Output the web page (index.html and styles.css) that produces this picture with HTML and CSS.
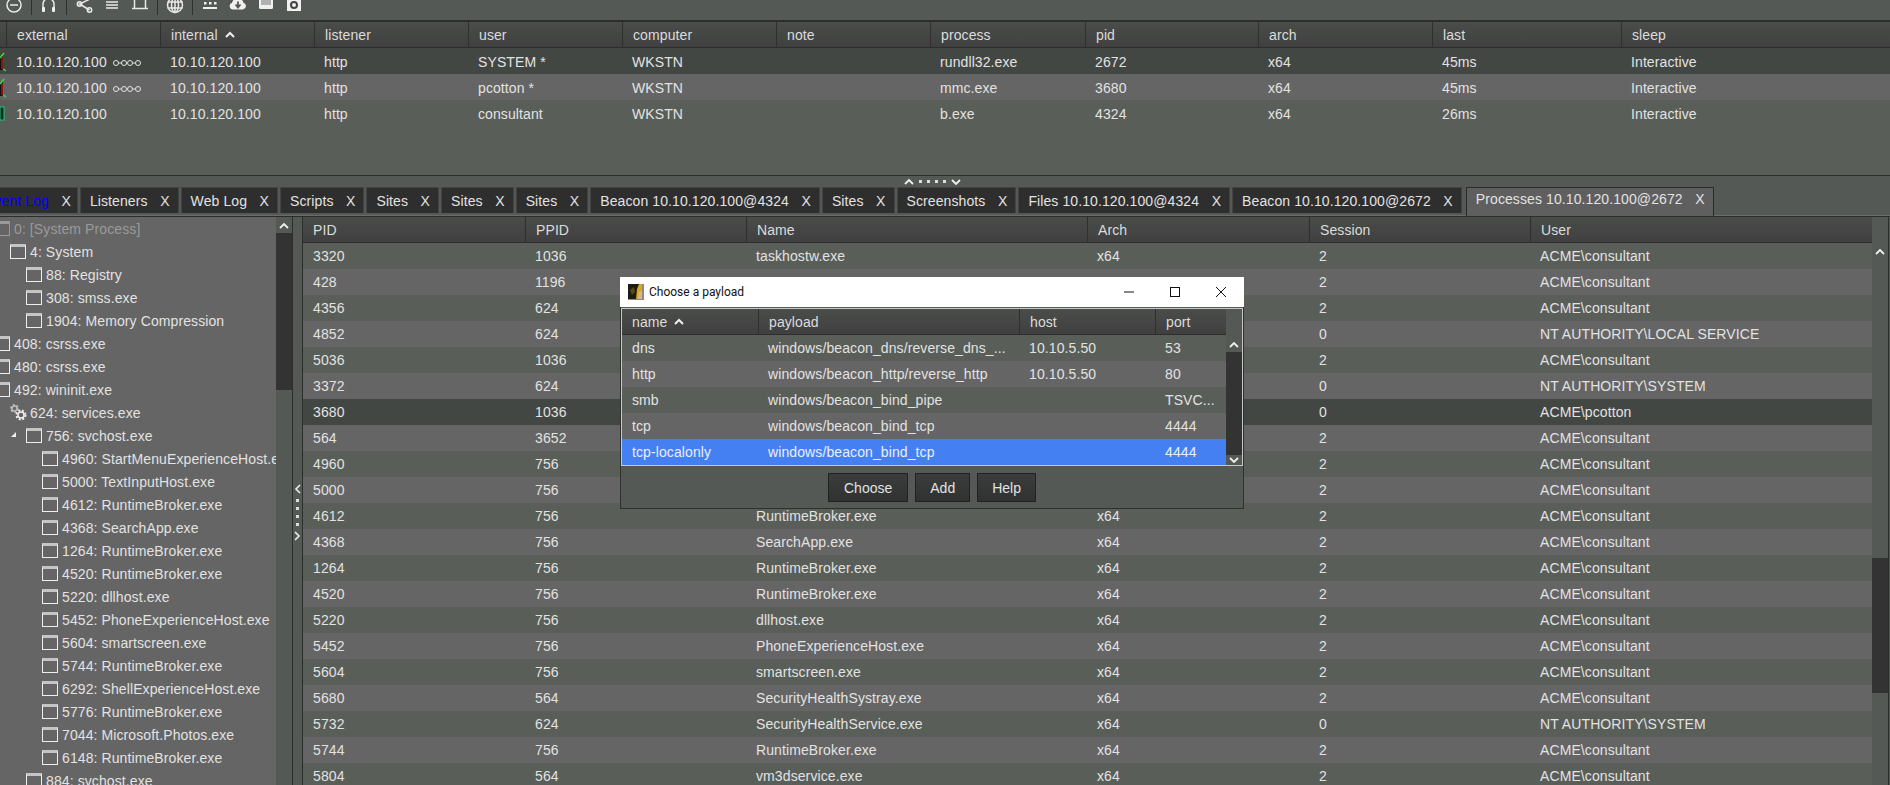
FILE: index.html
```html
<!DOCTYPE html>
<html>
<head>
    <title>Processes</title>
    <link rel="stylesheet" href="styles.css">
</head>
<body>
    <div class="toolbar">
        <svg class="tool" viewBox="0 0 28 20"><circle cx="14" cy="5" r="7"/><path d="M10 5H18"/></svg>
        <span class="tool-sep"></span>
        <svg class="tool" viewBox="0 0 28 20"><path d="M8 9V4a5 5 0 0 1 11 0v5"/><rect class="fill" x="7" y="7" width="3" height="5" rx="1"/><rect class="fill" x="17" y="7" width="3" height="5" rx="1"/></svg>
        <span class="tool-sep"></span>
        <svg class="tool" viewBox="0 0 28 20"><path d="M20 -1L9.500 4L19.500 10"/><circle cx="9.500" cy="4" r="2.200"/><circle cx="19.500" cy="10" r="2.200"/></svg>
        <svg class="tool" viewBox="0 0 28 20"><path d="M8 2H20M8 5H20M8 8H20"/></svg>
        <svg class="tool" viewBox="0 0 28 20"><path d="M8.500 -2V8M19.500 -2V8M6 8.500H22"/></svg>
        <span class="tool-sep"></span>
        <svg class="tool" viewBox="0 0 28 20"><circle cx="14" cy="5" r="7.500"/><ellipse cx="14" cy="5" rx="3.500" ry="7.500"/><path d="M14 -3V13M6.500 2H21.500M6.500 8H21.500"/></svg>
        <span class="tool-sep"></span>
        <svg class="tool" viewBox="0 0 28 20"><rect class="fill" x="8" y="2" width="2.500" height="2.500"/><rect class="fill" x="13" y="2" width="2.500" height="2.500"/><rect class="fill" x="18" y="2" width="2.500" height="2.500"/><rect class="fill" x="7" y="7" width="14" height="2"/></svg>
        <svg class="tool" viewBox="0 0 28 20"><path class="fill" d="M9 9.500a3.500 3.500 0 0 1 -1 -6.800a6 6 0 0 1 11.500 0a3.500 3.500 0 0 1 -.5 6.800Z"/><path class="cut" d="M14 1.500V6M11.500 4.500L14 7.500L16.500 4.500"/></svg>
        <svg class="tool" viewBox="0 0 28 20"><rect class="fill" x="7" y="-3" width="14" height="12" rx="1.500"/><rect class="key" x="9" y="0" width="10" height="5"/></svg>
        <svg class="tool" viewBox="0 0 28 20"><rect class="fill" x="7" y="-2" width="14" height="13"/><circle class="lens" cx="14" cy="5" r="3"/></svg>
    </div>

    <div class="sessions">
        <div class="sess-row sess-head">
            <div></div><div>external</div><div>internal <svg class="sort" viewBox="0 0 10 7"><path d="M1 6L5 2L9 6"/></svg></div><div>listener</div><div>user</div><div>computer</div><div>note</div><div>process</div><div>pid</div><div>arch</div><div>last</div><div>sleep</div>
        </div>
        <div class="sess-row row-dark">
            <div class="cell-icon"><svg viewBox="0 0 6 26" width="6" height="26"><rect x="0" y="8" width="3" height="14" fill="#111"/><rect x="1" y="9" width="2" height="12" fill="#8a1414"/><path d="M0 10L4 5M3 21L6 23" stroke="#3be03b" stroke-width="1.500"/></svg></div>
            <div>10.10.120.100<svg class="chain" viewBox="0 0 30 8"><circle cx="4" cy="4" r="2.500"/><circle cx="12" cy="4" r="2.500"/><circle cx="18" cy="4" r="2.500"/><circle cx="26" cy="4" r="2.500"/><path d="M6.500 4H9.500M20.500 4H23.500"/></svg></div>
            <div>10.10.120.100</div><div>http</div><div>SYSTEM *</div><div>WKSTN</div><div></div><div>rundll32.exe</div><div>2672</div><div>x64</div><div>45ms</div><div>Interactive</div>
        </div>
        <div class="sess-row row-light">
            <div class="cell-icon"><svg viewBox="0 0 6 26" width="6" height="26"><rect x="0" y="8" width="3" height="14" fill="#111"/><rect x="1" y="9" width="2" height="12" fill="#8a1414"/><path d="M0 10L4 5M3 21L6 23" stroke="#3be03b" stroke-width="1.500"/></svg></div>
            <div>10.10.120.100<svg class="chain" viewBox="0 0 30 8"><circle cx="4" cy="4" r="2.500"/><circle cx="12" cy="4" r="2.500"/><circle cx="18" cy="4" r="2.500"/><circle cx="26" cy="4" r="2.500"/><path d="M6.500 4H9.500M20.500 4H23.500"/></svg></div>
            <div>10.10.120.100</div><div>http</div><div>pcotton *</div><div>WKSTN</div><div></div><div>mmc.exe</div><div>3680</div><div>x64</div><div>45ms</div><div>Interactive</div>
        </div>
        <div class="sess-row">
            <div class="cell-icon"><svg viewBox="0 0 6 26" width="6" height="26"><rect x="0" y="7" width="4" height="13" fill="#0b2a2a" stroke="#27c46a"/></svg></div>
            <div>10.10.120.100</div><div>10.10.120.100</div><div>http</div><div>consultant</div><div>WKSTN</div><div></div><div>b.exe</div><div>4324</div><div>x64</div><div>26ms</div><div>Interactive</div>
        </div>
    </div>

    <div class="splitter">
        <svg class="chev" viewBox="0 0 10 7"><path d="M1 6L5 2L9 6"/></svg>
        <span class="dot"></span><span class="dot"></span><span class="dot"></span><span class="dot"></span>
        <svg class="chev" viewBox="0 0 10 7"><path d="M1 2L5 6L9 2"/></svg>
    </div>

    <div class="tabs">
        <div class="tab first"><span class="log-link">Event Log</span><span class="x">X</span></div>
        <div class="tab">Listeners<span class="x">X</span></div>
        <div class="tab">Web Log<span class="x">X</span></div>
        <div class="tab">Scripts<span class="x">X</span></div>
        <div class="tab">Sites<span class="x">X</span></div>
        <div class="tab">Sites<span class="x">X</span></div>
        <div class="tab">Sites<span class="x">X</span></div>
        <div class="tab">Beacon 10.10.120.100@4324<span class="x">X</span></div>
        <div class="tab">Sites<span class="x">X</span></div>
        <div class="tab">Screenshots<span class="x">X</span></div>
        <div class="tab">Files 10.10.120.100@4324<span class="x">X</span></div>
        <div class="tab">Beacon 10.10.120.100@2672<span class="x">X</span></div>
        <div class="tab active">Processes 10.10.120.100@2672<span class="x">X</span></div>
    </div>

    <div class="workspace">
        <div class="tree-panel">
            <div class="tree">
                <div class="node lvl0 dim"><i class="win"></i>0: [System Process]</div>
                <div class="node lvl1"><i class="win"></i>4: System</div>
                <div class="node lvl2"><i class="win"></i>88: Registry</div>
                <div class="node lvl2"><i class="win"></i>308: smss.exe</div>
                <div class="node lvl2"><i class="win"></i>1904: Memory Compression</div>
                <div class="node lvl0"><i class="win"></i>408: csrss.exe</div>
                <div class="node lvl0"><i class="win"></i>480: csrss.exe</div>
                <div class="node lvl0"><i class="win"></i>492: wininit.exe</div>
                <div class="node lvl1 svc">
                    <svg class="gears" viewBox="0 0 17 17"><circle cx="4.500" cy="4.500" r="2.500"/><circle class="teeth" cx="4.500" cy="4.500" r="3.500"/><circle class="big" cx="11" cy="11" r="3"/><circle class="teeth big" cx="11" cy="11" r="4.500"/></svg>624: services.exe
                </div>
                <div class="node lvl2 open"><svg class="tri" viewBox="0 0 5 5"><path d="M0 5L5 0V5Z"/></svg><i class="win"></i>756: svchost.exe</div>
                <div class="node lvl3"><i class="win"></i>4960: StartMenuExperienceHost.exe</div>
                <div class="node lvl3"><i class="win"></i>5000: TextInputHost.exe</div>
                <div class="node lvl3"><i class="win"></i>4612: RuntimeBroker.exe</div>
                <div class="node lvl3"><i class="win"></i>4368: SearchApp.exe</div>
                <div class="node lvl3"><i class="win"></i>1264: RuntimeBroker.exe</div>
                <div class="node lvl3"><i class="win"></i>4520: RuntimeBroker.exe</div>
                <div class="node lvl3"><i class="win"></i>5220: dllhost.exe</div>
                <div class="node lvl3"><i class="win"></i>5452: PhoneExperienceHost.exe</div>
                <div class="node lvl3"><i class="win"></i>5604: smartscreen.exe</div>
                <div class="node lvl3"><i class="win"></i>5744: RuntimeBroker.exe</div>
                <div class="node lvl3"><i class="win"></i>6292: ShellExperienceHost.exe</div>
                <div class="node lvl3"><i class="win"></i>5776: RuntimeBroker.exe</div>
                <div class="node lvl3"><i class="win"></i>7044: Microsoft.Photos.exe</div>
                <div class="node lvl3"><i class="win"></i>6148: RuntimeBroker.exe</div>
                <div class="node lvl2"><i class="win"></i>884: svchost.exe</div>
            </div>
            <div class="scroll tree-scroll">
                <svg class="chev" viewBox="0 0 10 7"><path d="M1 6L5 2L9 6"/></svg>
                <div class="thumb"></div>
            </div>
        </div>

        <div class="vsplit">
            <svg class="vchev" viewBox="0 0 7 10"><path d="M6 1L2 5L6 9"/></svg>
            <span class="dot"></span><span class="dot"></span><span class="dot"></span><span class="dot"></span>
            <svg class="vchev" viewBox="0 0 7 10"><path d="M1 1L5 5L1 9"/></svg>
        </div>

        <div class="proc-panel">
            <div class="proc">
                <div class="proc-row sess-head"><div>PID</div><div>PPID</div><div>Name</div><div>Arch</div><div>Session</div><div>User</div></div>
                <div class="proc-row"><div>3320</div><div>1036</div><div>taskhostw.exe</div><div>x64</div><div>2</div><div>ACME\consultant</div></div>
                <div class="proc-row row-light"><div>428</div><div>1196</div><div></div><div></div><div>2</div><div>ACME\consultant</div></div>
                <div class="proc-row"><div>4356</div><div>624</div><div></div><div></div><div>2</div><div>ACME\consultant</div></div>
                <div class="proc-row row-light"><div>4852</div><div>624</div><div></div><div></div><div>0</div><div>NT AUTHORITY\LOCAL SERVICE</div></div>
                <div class="proc-row"><div>5036</div><div>1036</div><div></div><div></div><div>2</div><div>ACME\consultant</div></div>
                <div class="proc-row row-light"><div>3372</div><div>624</div><div></div><div></div><div>0</div><div>NT AUTHORITY\SYSTEM</div></div>
                <div class="proc-row row-dark"><div>3680</div><div>1036</div><div></div><div></div><div>0</div><div>ACME\pcotton</div></div>
                <div class="proc-row row-light"><div>564</div><div>3652</div><div></div><div></div><div>2</div><div>ACME\consultant</div></div>
                <div class="proc-row"><div>4960</div><div>756</div><div></div><div></div><div>2</div><div>ACME\consultant</div></div>
                <div class="proc-row row-light"><div>5000</div><div>756</div><div></div><div></div><div>2</div><div>ACME\consultant</div></div>
                <div class="proc-row"><div>4612</div><div>756</div><div>RuntimeBroker.exe</div><div>x64</div><div>2</div><div>ACME\consultant</div></div>
                <div class="proc-row row-light"><div>4368</div><div>756</div><div>SearchApp.exe</div><div>x64</div><div>2</div><div>ACME\consultant</div></div>
                <div class="proc-row"><div>1264</div><div>756</div><div>RuntimeBroker.exe</div><div>x64</div><div>2</div><div>ACME\consultant</div></div>
                <div class="proc-row row-light"><div>4520</div><div>756</div><div>RuntimeBroker.exe</div><div>x64</div><div>2</div><div>ACME\consultant</div></div>
                <div class="proc-row"><div>5220</div><div>756</div><div>dllhost.exe</div><div>x64</div><div>2</div><div>ACME\consultant</div></div>
                <div class="proc-row row-light"><div>5452</div><div>756</div><div>PhoneExperienceHost.exe</div><div>x64</div><div>2</div><div>ACME\consultant</div></div>
                <div class="proc-row"><div>5604</div><div>756</div><div>smartscreen.exe</div><div>x64</div><div>2</div><div>ACME\consultant</div></div>
                <div class="proc-row row-light"><div>5680</div><div>564</div><div>SecurityHealthSystray.exe</div><div>x64</div><div>2</div><div>ACME\consultant</div></div>
                <div class="proc-row"><div>5732</div><div>624</div><div>SecurityHealthService.exe</div><div>x64</div><div>0</div><div>NT AUTHORITY\SYSTEM</div></div>
                <div class="proc-row row-light"><div>5744</div><div>756</div><div>RuntimeBroker.exe</div><div>x64</div><div>2</div><div>ACME\consultant</div></div>
                <div class="proc-row"><div>5804</div><div>564</div><div>vm3dservice.exe</div><div>x64</div><div>2</div><div>ACME\consultant</div></div>
            </div>
            <div class="scroll proc-scroll">
                <svg class="chev" viewBox="0 0 10 7"><path d="M1 6L5 2L9 6"/></svg>
                <div class="thumb"></div>
            </div>
        </div>
    </div>

    <div class="dialog">
        <div class="title-bar">
            <svg class="app-icon" viewBox="0 0 16 16"><rect width="16" height="16" fill="#8d8a80"/><rect width="13" height="15" fill="#1e1a14"/><path d="M2 6L6 3L7 8L4 11Z" fill="#5a4a18"/><path d="M8 15L9 5L11 0H14V7L11 15Z" fill="#d8a81e"/><path d="M10 15L11 8L14 7V15Z" fill="#d9b48c"/></svg>
            <span class="title-text">Choose a payload</span>
            <svg class="win-btn" viewBox="0 0 46 30"><path d="M18 15H28"/></svg>
            <svg class="win-btn" viewBox="0 0 46 30"><rect x="18.500" y="10.500" width="9" height="9"/></svg>
            <svg class="win-btn" viewBox="0 0 46 30"><path d="M18 10L28 20M28 10L18 20"/></svg>
        </div>
        <div class="pay-frame">
            <div class="pay-table">
                <div class="pay-row sess-head"><div>name <svg class="sort" viewBox="0 0 10 7"><path d="M1 6L5 2L9 6"/></svg></div><div>payload</div><div>host</div><div>port</div></div>
                <div class="pay-row"><div>dns</div><div>windows/beacon_dns/reverse_dns_...</div><div>10.10.5.50</div><div>53</div></div>
                <div class="pay-row row-light"><div>http</div><div>windows/beacon_http/reverse_http</div><div>10.10.5.50</div><div>80</div></div>
                <div class="pay-row"><div>smb</div><div>windows/beacon_bind_pipe</div><div></div><div>TSVC...</div></div>
                <div class="pay-row row-light"><div>tcp</div><div>windows/beacon_bind_tcp</div><div></div><div>4444</div></div>
                <div class="pay-row row-sel"><div>tcp-localonly</div><div>windows/beacon_bind_tcp</div><div></div><div>4444</div></div>
            </div>
            <div class="pay-scroll">
                <svg class="chev" viewBox="0 0 10 7"><path d="M1 6L5 2L9 6"/></svg>
                <div class="thumb"></div>
                <svg class="chev" viewBox="0 0 10 7"><path d="M1 2L5 6L9 2"/></svg>
            </div>
        </div>
        <div class="buttons">
            <button class="btn">Choose</button>
            <button class="btn">Add</button>
            <button class="btn">Help</button>
        </div>
    </div>
</body>
</html>
```

FILE: styles.css
```css
html {
    overflow: hidden;
    height: 785px;
}

body {
    margin: 0;
    height: 785px;
    overflow: hidden;
    position: relative;
    background-color: #555955;
    color: #e2e2e2;
    font-family: "Liberation Sans", Arial, sans-serif;
    font-size: 14px;
    letter-spacing: 0.1px;
}

/* toolbar */
.toolbar {
    display: flex;
    height: 20px;
    overflow: hidden;
    border-bottom: 2px solid #2b2e2c;
}

.tool {
    width: 28px;
    height: 20px;
    flex: none;
    fill: none;
    stroke: #e8e8e8;
    stroke-width: 1.5;
}

.tool .fill {
    fill: #f0f0f0;
    stroke: none;
}

.tool .cut {
    stroke: #555955;
    stroke-width: 1.8;
}

.tool .key {
    fill: #b0b0b0;
    stroke: none;
}

.tool .lens {
    fill: #f0f0f0;
    stroke: #444;
    stroke-width: 2;
}

.tool-sep {
    width: 1px;
    height: 15px;
    margin: 0 3px;
    background-color: #2e312f;
    flex: none;
}

/* session table */
.sessions {
    height: 153px;
    background-color: #595e59;
}

.sess-row {
    display: grid;
    grid-template-columns: 6px repeat(6, 154px) 155px 173px 174px 189px 1fr;
    height: 26px;
    line-height: 28px;
}

.sess-row > div,
.proc-row > div,
.pay-row > div {
    padding-left: 10px;
    white-space: nowrap;
    overflow: hidden;
}

.sess-row > .cell-icon,
.sess-row > div:first-child {
    padding-left: 0;
}

.sess-head {
    background: linear-gradient(#4a4d4a, #3f3f3f);
    box-shadow: inset 0 -1px 0 #2e2e2e;
    line-height: 26px;
    color: #dcdcdc;
}

.sess-row.sess-head {
    line-height: 26px;
}

.sess-head > div {
    border-left: 1px solid #2f2f2f;
}

.sess-row.sess-head > div:first-child,
.proc-row.sess-head > div:first-child,
.pay-row.sess-head > div:first-child {
    border-left: none;
}

.sort {
    width: 10px;
    height: 7px;
    margin-left: 3px;
    vertical-align: 2px;
    fill: none;
    stroke: #eee;
    stroke-width: 2;
}

.row-dark {
    background-color: #434744;
}

.row-light {
    background-color: #656565;
}

.cell-icon svg {
    display: block;
}

.chain {
    width: 30px;
    height: 8px;
    margin-left: 5px;
    fill: none;
    stroke: #e2e2e2;
    stroke-width: 1;
}

/* horizontal splitter */
.splitter {
    height: 11px;
    border-top: 1px solid #2b2e2c;
    display: flex;
    align-items: center;
    justify-content: center;
    gap: 5px;
    padding-right: 26px;
}

.chev {
    width: 10px;
    height: 7px;
    flex: none;
    fill: none;
    stroke: #eee;
    stroke-width: 1.8;
}

.dot {
    width: 3px;
    height: 3px;
    background-color: #ddd;
    flex: none;
}

/* tabs */
.tabs {
    display: flex;
    gap: 2px;
    height: 29px;
    box-sizing: border-box;
    padding-bottom: 2px;
    border-bottom: 1px solid #6c6c6c;
}

.tab {
    height: 26px;
    box-sizing: border-box;
    padding: 0 8px 0 9px;
    line-height: 27px;
    background-color: #2e2e2e;
    border: 1px solid #424442;
    border-bottom: none;
    white-space: nowrap;
    flex: none;
}

.tab.first {
    margin-left: -25px;
    padding-right: 6px;
}

.tab.active {
    height: 29px;
    margin-left: 2px;
    line-height: 23px;
    background-color: #5f5f5f;
    border-color: #2a2a2a;
}

.x {
    margin-left: 12.500px;
}

.log-link {
    color: #0000ff;
}

/* main area */
.workspace {
    display: flex;
    height: 568px;
    border-top: 1px solid #2b2e2c;
    overflow: hidden;
}

.tree-panel {
    display: flex;
    width: 292px;
    flex: none;
    border-right: 1px solid #2b2e2c;
}

.tree {
    width: 276px;
    flex: none;
    overflow: hidden;
    background-color: #656565;
}

.node {
    display: flex;
    align-items: center;
    height: 23px;
    white-space: nowrap;
}

.lvl0 {
    padding-left: 0;
    margin-left: -6px;
}

.lvl1 {
    padding-left: 10px;
}

.lvl2 {
    padding-left: 26px;
}

.lvl3 {
    padding-left: 42px;
}

.dim {
    color: #9a9a9a;
}

.win {
    width: 16px;
    height: 15px;
    box-sizing: border-box;
    margin-right: 4px;
    flex: none;
    border: 1px solid #eee;
    border-top: 3px solid #c4c4c4;
}

.dim .win {
    border-color: #9a9a9a;
}

.gears {
    width: 17px;
    height: 17px;
    margin-right: 3px;
    flex: none;
    fill: none;
    stroke: #bbb;
    stroke-width: 1.5;
}

.gears .teeth {
    stroke-width: 2;
    stroke-dasharray: 2 1.6;
}

.gears .big {
    stroke: #eee;
}

.open {
    position: relative;
}

.tri {
    position: absolute;
    left: 11px;
    top: 8px;
    width: 5px;
    height: 5px;
    fill: #eee;
}

.scroll {
    width: 16px;
    flex: none;
    display: flex;
    flex-direction: column;
    align-items: center;
    background-color: #555955;
}

.scroll .chev {
    margin-top: 5px;
}

.thumb {
    align-self: stretch;
    background-color: #333;
}

.tree-scroll .thumb {
    height: 157px;
    margin-top: 4px;
}

.proc-scroll .thumb {
    height: 135px;
    margin-top: 303px;
}

.proc-scroll .chev {
    margin-top: 31px;
}

.vsplit {
    width: 9px;
    flex: none;
    display: flex;
    flex-direction: column;
    align-items: center;
    gap: 5px;
    padding-top: 267px;
    box-sizing: border-box;
}

.vchev {
    width: 7px;
    height: 10px;
    fill: none;
    stroke: #eee;
    stroke-width: 1.6;
}

.proc-panel {
    display: flex;
    flex: 1;
    min-width: 0;
    border-right: 1px solid #2b2e2c;
    margin-right: 1px;
    border-left: 1px solid #2b2e2c;
}

.proc {
    flex: 1;
    min-width: 0;
    background-color: #595e59;
}

.proc-row {
    display: grid;
    grid-template-columns: 222px 221px 341px 222px 221px 1fr;
    height: 26px;
    line-height: 27px;
}

.proc-row.sess-head {
    line-height: 26px;
}

/* payload dialog */
.dialog {
    position: absolute;
    left: 620px;
    top: 277px;
    width: 624px;
    height: 232px;
    box-sizing: border-box;
    border: 1px solid #2f312f;
    border-top: none;
    background-color: #555955;
}

.title-bar {
    display: flex;
    align-items: center;
    height: 30px;
    margin: 0 -1px;
    background-color: #fff;
    color: #111;
}

.app-icon {
    width: 16px;
    height: 16px;
    margin-left: 8px;
    margin-right: 5px;
    flex: none;
}

.title-text {
    flex: 1;
    font-family: Roboto, "Liberation Sans", sans-serif;
    font-size: 12px;
    letter-spacing: 0;
}

.win-btn {
    width: 46px;
    height: 30px;
    flex: none;
    fill: none;
    stroke: #111;
    stroke-width: 1;
}

.pay-frame {
    display: flex;
    margin-top: 1px;
    height: 158px;
    box-sizing: border-box;
    border: 1px solid #c8c8c8;
}

.pay-table {
    width: 604px;
    flex: none;
}

.pay-row {
    display: grid;
    grid-template-columns: 136px 261px 136px 71px;
    height: 26px;
    line-height: 27px;
    background-color: #595e59;
}

.pay-row.sess-head {
    background: linear-gradient(#4a4d4a, #3f3f3f);
    line-height: 26px;
}

.pay-row.row-light {
    background-color: #656565;
}

.pay-row.row-sel {
    background-color: #4480f2;
}

.pay-row.row-sel > div {
    color: #eef;
}

.pay-scroll {
    flex: 1;
    display: flex;
    flex-direction: column;
    align-items: center;
    padding-top: 32px;
    background-color: #555955;
}

.pay-scroll .thumb {
    height: 103px;
    margin-top: 4px;
    margin-bottom: 1px;
    background-color: #333;
}

.buttons {
    display: flex;
    justify-content: center;
    gap: 7px;
    margin-top: 7px;
}

.btn {
    height: 29px;
    padding: 0 14px;
    border: 1px solid #222;
    background: linear-gradient(#3a3d3b, #2f3230);
    color: #e2e2e2;
    font-family: "Liberation Sans", Arial, sans-serif;
    font-size: 14px;
}

.btn:first-child {
    padding: 0 15px;
}
```
